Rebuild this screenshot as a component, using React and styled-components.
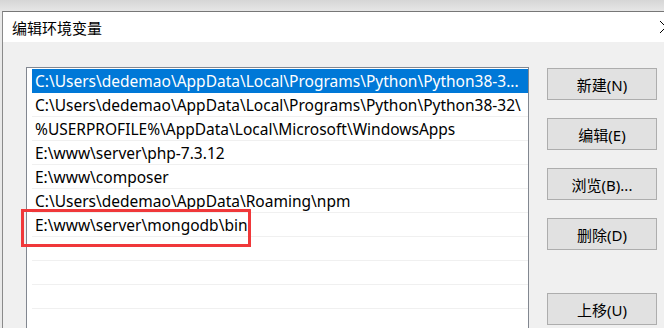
import React from "react";
import styled, { createGlobalStyle } from "styled-components";

const Global = createGlobalStyle`
  html, body { margin: 0; padding: 0; background: #f0f0f0; }
  body { font-family: "Noto Sans", "Noto Sans CJK SC", sans-serif; }
`;

const Page = styled.div`
  width: 664px;
  height: 328px;
  overflow: hidden;
  display: flex;
  flex-direction: column;
`;

const Desktop = styled.div`
  height: 11px;
  flex: none;
  background: linear-gradient(#d6d6d6, #e6e6e6);
`;

const Stage = styled.div`
  flex: 1;
  display: flex;
  min-height: 0;
`;

const BehindWindow = styled.div`
  width: 2px;
  flex: none;
  background: #e9e9e9;
`;

const Window = styled.div`
  flex: 1;
  display: flex;
  flex-direction: column;
  border-top: 1px solid #777;
  border-left: 1px solid #8a8a8a;
  background: #f0f0f0;
  min-width: 0;
`;

const TitleBar = styled.div`
  height: 30px;
  flex: none;
  background: #fff;
  display: flex;
  align-items: center;
  justify-content: space-between;
  padding-left: 9px;
  font-family: "Noto Sans CJK SC", sans-serif;
  font-size: 15px;
  color: #000;
`;

const CloseGlyph = styled.svg`
  width: 14px;
  height: 14px;
  margin-right: -9px;
  flex: none;
`;

const Body = styled.div`
  flex: 1;
  display: flex;
  align-items: flex-start;
  padding: 25px 0 0 23px;
  min-height: 0;
`;

const ListBox = styled.div`
  width: 503px;
  height: 300px;
  flex: none;
  border: 1px solid #828790;
  background: #fff;
  padding: 1px 0 0 5px;
  box-sizing: border-box;
  display: flex;
  flex-direction: column;
`;

const Row = styled.div`
  position: relative;
  height: 23px;
  flex: none;
  border-bottom: 1px solid #f0f0f0;
  display: flex;
  align-items: center;
  padding-left: 3px;
  font-size: 15.5px;
  white-space: nowrap;
  background: ${(p) => (p.$selected ? "#0078d7" : "#fff")};
  color: ${(p) => (p.$selected ? "#fff" : "#000")};
  border-bottom-color: ${(p) => (p.$selected ? "#0078d7" : "#f0f0f0")};
`;

const Highlight = styled.div`
  position: absolute;
  z-index: 2;
  left: -11px;
  top: -4px;
  width: 230px;
  height: 38px;
  box-sizing: border-box;
  border: 3px solid #f0383a;
  pointer-events: none;
`;

const Buttons = styled.div`
  margin-left: 18px;
  padding-top: 1px;
  display: flex;
  flex-direction: column;
  gap: 18px;
  width: 110px;
  flex: none;
`;

const Button = styled.button`
  height: 32px;
  width: 110px;
  box-sizing: border-box;
  border: 1px solid #adadad;
  background: #e1e1e1;
  font-family: "Noto Sans", "Noto Sans CJK SC", sans-serif;
  font-size: 15px;
  color: #000;
  padding: 0;
  margin-top: ${(p) => (p.$gapBefore ? "25px" : "0")};
`;

const paths = [
  "C:\\Users\\dedemao\\AppData\\Local\\Programs\\Python\\Python38-3...",
  "C:\\Users\\dedemao\\AppData\\Local\\Programs\\Python\\Python38-32\\",
  "%USERPROFILE%\\AppData\\Local\\Microsoft\\WindowsApps",
  "E:\\www\\server\\php-7.3.12",
  "E:\\www\\composer",
  "C:\\Users\\dedemao\\AppData\\Roaming\\npm",
  "E:\\www\\server\\mongodb\\bin",
  "",
  "",
  "",
  "",
];

export default function App() {
  return (
    <>
      <Global />
      <Page>
        <Desktop />
        <Stage>
          <BehindWindow />
          <Window>
            <TitleBar>
              <span>编辑环境变量</span>
              <CloseGlyph viewBox="0 0 14 14">
                <path d="M1 1 L13 13 M13 1 L1 13" stroke="#000" strokeWidth="1" fill="none" />
              </CloseGlyph>
            </TitleBar>
            <Body>
              <ListBox>
                {paths.map((p, i) => (
                  <Row key={i} $selected={i === 0}>
                    {p}
                    {i === 6 && <Highlight />}
                  </Row>
                ))}
              </ListBox>
              <Buttons>
                <Button>新建(N)</Button>
                <Button>编辑(E)</Button>
                <Button>浏览(B)...</Button>
                <Button>删除(D)</Button>
                <Button $gapBefore>上移(U)</Button>
              </Buttons>
            </Body>
          </Window>
        </Stage>
      </Page>
    </>
  );
}
